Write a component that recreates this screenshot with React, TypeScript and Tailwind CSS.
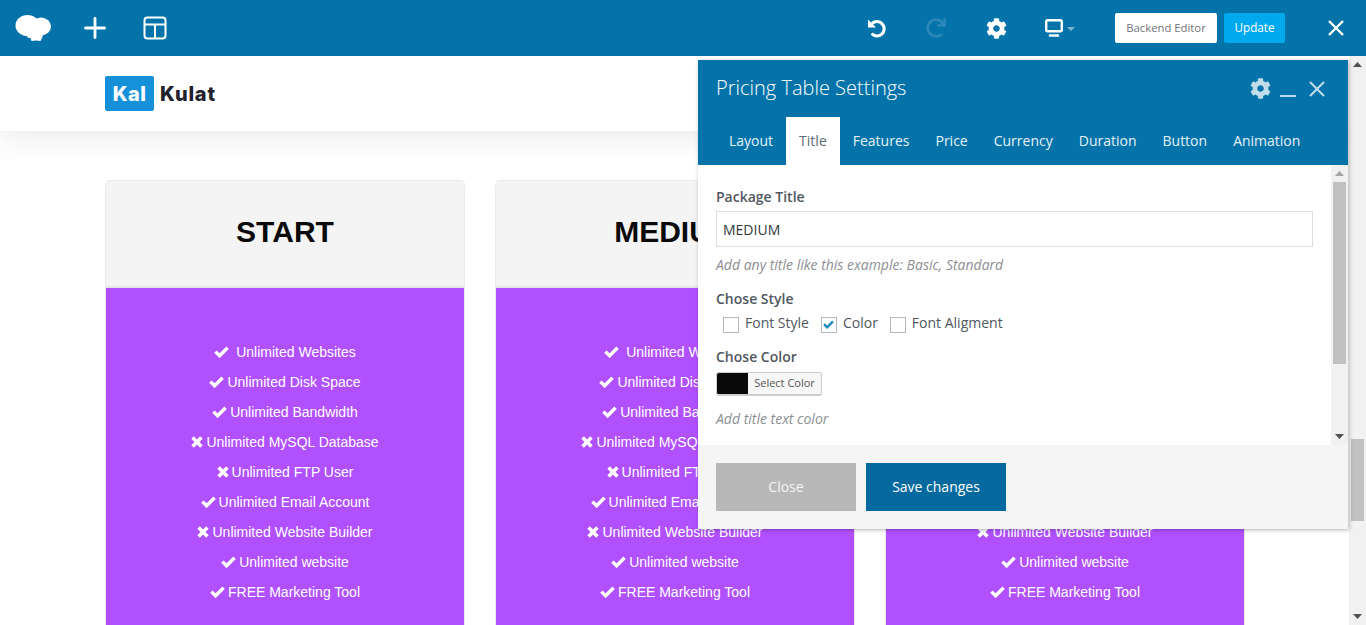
import React from 'react'
import { FaCog, FaRedo } from 'react-icons/fa'

const features: { label: string; ok: boolean; wide?: boolean }[] = [
  { label: 'Unlimited Websites', ok: true, wide: true },
  { label: 'Unlimited Disk Space', ok: true },
  { label: 'Unlimited Bandwidth', ok: true },
  { label: 'Unlimited MySQL Database', ok: false },
  { label: 'Unlimited FTP User', ok: false },
  { label: 'Unlimited Email Account', ok: true },
  { label: 'Unlimited Website Builder', ok: false },
  { label: 'Unlimited website', ok: true },
  { label: 'FREE Marketing Tool', ok: true },
]

const tabs = ['Layout', 'Title', 'Features', 'Price', 'Currency', 'Duration', 'Button', 'Animation']

const ArrowUp = ({ className }: { className: string }) => (
  <svg width="9" height="5" viewBox="0 0 9 5" className={className}>
    <path d="M4.5 0L9 5H0z" fill="currentColor" />
  </svg>
)

const ArrowDown = ({ className }: { className: string }) => (
  <svg width="9" height="5" viewBox="0 0 9 5" className={className}>
    <path d="M0 0h9L4.5 5z" fill="currentColor" />
  </svg>
)

const CheckMark = ({ className }: { className: string }) => (
  <svg viewBox="0 0 15 12" className={className} fill="none" stroke="currentColor" strokeWidth="3.4">
    <path d="M1.4 5.6l4.2 4.2L13.6 1.8" />
  </svg>
)

const CrossMark = () => (
  <svg viewBox="0 0 12 12" className="w-[12px] h-[12px]" fill="none" stroke="currentColor" strokeWidth="3.6">
    <path d="M1.6 1.6l8.8 8.8M10.4 1.6l-8.8 8.8" />
  </svg>
)

const CloudLogo = () => (
  <svg width="38" height="28" viewBox="0 0 38 28" fill="white">
    <ellipse cx="13.5" cy="11.5" rx="12" ry="10.5" />
    <ellipse cx="27" cy="12.5" rx="10" ry="9" />
    <path d="M12 18h18l-2 6-1.5 3-5-.5-4 .5-1-3-3-.5z" />
  </svg>
)

const LayoutIcon = () => (
  <svg width="24" height="24" viewBox="0 0 24 24" fill="none" stroke="white" strokeWidth="2">
    <rect x="1.5" y="1.5" width="21" height="21" rx="3" />
    <path d="M1.5 8.5h21M12 8.5v14" />
  </svg>
)

const UndoIcon = () => (
  <svg width="20" height="20" viewBox="0 0 20 20" fill="none">
    <path d="M5 5.6A7.2 7.2 0 1 1 4.6 15.6" stroke="white" strokeWidth="3" />
    <path d="M1 1.6v8h8z" fill="white" />
  </svg>
)

const DesktopIcon = () => (
  <svg width="20" height="19" viewBox="0 0 20 19" fill="none">
    <rect x="1.2" y="1.2" width="15.6" height="11" rx="1.5" stroke="white" strokeWidth="2.4" />
    <path d="M5 16.5h8" stroke="white" strokeWidth="2.4" strokeLinecap="round" />
  </svg>
)

const Card = ({ title }: { title: string }) => (
  <div className="border-x border-t border-[#e9e9ee] rounded-t-[5px]">
    <div className="h-[101px] pb-[4px] box-content bg-[#f4f4f4] rounded-t-[5px] border-b-2 border-[#e6e6e6] flex items-center justify-center">
      <h2 className="text-[30px] font-bold text-[#0a0a0a] font-['Liberation_Sans',sans-serif]">{title}</h2>
    </div>
    <ul className="bg-[#b150ff] pt-[49px] pb-10 text-white text-[14px] font-['Liberation_Sans',sans-serif]">
      {features.map(f => (
        <li key={f.label} className={`h-[30px] flex items-center justify-center ${f.wide ? 'gap-[7px]' : 'gap-[3px]'}`}>
          {f.ok ? <CheckMark className="w-[15px] h-[12px]" /> : <CrossMark />}
          <span>{f.label}</span>
        </li>
      ))}
    </ul>
  </div>
)

const PricingSettings = () => (
  <div className="absolute left-[698px] top-[60px] w-[650px] h-[469px] flex flex-col bg-white shadow-[1px_1px_4px_rgba(0,0,0,0.3)] font-['Open_Sans',sans-serif]">
    <div className="h-[105px] bg-[#0473aa] shrink-0 flex flex-col">
      <div className="h-[57px] pl-[18px] pr-[23px] flex items-center justify-between">
        <h3 className="text-[20px] font-light text-white pb-[2px]">Pricing Table Settings</h3>
        <div className="flex items-center text-[#c3dcea]">
          <FaCog className="w-[21px] h-[21px]" />
          <div className="w-[16px] h-[2px] bg-[#c3dcea] ml-[9px] mt-[15px]" />
          <svg width="16" height="16" viewBox="0 0 16 16" className="ml-[13px]" stroke="#c3dcea" strokeWidth="2">
            <path d="M1 1l14 14M15 1L1 15" />
          </svg>
        </div>
      </div>
      <div className="flex-1 pl-[18px] flex items-stretch text-[14px] text-[#e6f1f7]">
        {tabs.map(t => (
          <div
            key={t}
            className={`px-[13px] pb-[2px] flex items-center ${t === 'Title' ? 'bg-white text-[#5d6b73]' : ''}`}
          >
            {t}
          </div>
        ))}
      </div>
    </div>

    <div className="h-[280px] shrink-0 flex">
      <div className="flex-1 pl-[18px] pr-[18px] pt-[23px] text-[14px] text-[#50575e]">
        <label className="block font-semibold text-[14px] leading-[18px]">Package Title</label>
        <input
          readOnly
          value="MEDIUM"
          className="block mt-[5px] w-full h-[36px] border border-[#dddddd] px-[6px] text-[14px] text-[#32373c] outline-none"
        />
        <p className="mt-[8px] italic text-[#8c8f94] text-[14px] leading-[19px]">Add any title like this example: Basic, Standard</p>
        <div className="mt-[15px] font-semibold leading-[19px]">Chose Style</div>
        <div className="mt-[5px] pl-[7px] flex items-center h-[19px] leading-[19px]">
          <span className="w-4 h-4 border border-[#b4b9be] bg-white mr-[6px] mt-[4px]" />
          <span className="mr-[12px]">Font Style</span>
          <span className="w-4 h-4 border border-[#b4b9be] bg-white mr-[6px] mt-[4px] flex items-center justify-center">
            <CheckMark className="w-[11px] h-[9px] text-[#1e8cbe]" />
          </span>
          <span className="mr-[12px]">Color</span>
          <span className="w-4 h-4 border border-[#b4b9be] bg-white mr-[6px] mt-[4px]" />
          <span>Font Aligment</span>
        </div>
        <div className="mt-[15px] font-semibold leading-[19px]">Chose Color</div>
        <div className="mt-[6px] w-[106px] h-[24px] flex rounded-[3px] border border-[#cccccc] border-b-2 overflow-hidden">
          <span className="w-[31px] bg-[#0a0a0a]" />
          <span className="flex-1 bg-[#f7f7f7] text-[11px] text-[#555555] flex items-center justify-center">Select Color</span>
        </div>
        <p className="mt-[13px] italic text-[#8c8f94] leading-[19px]">Add title text color</p>
      </div>
      <div className="w-[17px] bg-[#f1f1f1] flex flex-col items-center shrink-0">
        <div className="h-[17px] flex items-center justify-center"><ArrowUp className="text-[#a3a3a3]" /></div>
        <div className="w-[13px] h-[182px] bg-[#c1c1c1]" />
        <div className="flex-1" />
        <div className="h-[17px] flex items-center justify-center"><ArrowDown className="text-[#505050]" /></div>
      </div>
    </div>

    <div className="flex-1 bg-[#f5f5f5] pl-[18px] pt-[18px] flex gap-[10px] text-[14px]">
      <button className="w-[140px] h-[48px] pb-[2px] bg-[#b8b8b8] text-[#f4f4f4]">Close</button>
      <button className="w-[140px] h-[48px] pb-[2px] bg-[#04699f] text-white">Save changes</button>
    </div>
  </div>
)

export default function App() {
  return (
    <div className="relative h-[625px] w-[1366px] overflow-hidden bg-white">
      <header className="h-[56px] bg-[#0473aa] flex items-center pl-[14px] pr-[22px] font-['Open_Sans',sans-serif]">
        <CloudLogo />
        <svg width="22" height="22" viewBox="0 0 22 22" className="ml-[32px]" stroke="white" strokeWidth="2.8" strokeLinecap="round">
          <path d="M11 1.5v19M1.5 11h19" />
        </svg>
        <div className="ml-[37px]"><LayoutIcon /></div>
        <div className="flex-1" />
        <UndoIcon />
        <FaRedo className="ml-[39px] w-[20px] h-[20px] text-[#2a88b8]" />
        <FaCog className="ml-[40px] w-[21px] h-[21px] text-white" />
        <div className="ml-[38px]"><DesktopIcon /></div>
        <svg width="8" height="4" viewBox="0 0 8 4" className="ml-[2px] mt-[1px]"><path d="M0 0h8L4 4z" fill="#7fb6d3" /></svg>
        <button className="ml-[40px] w-[102px] h-[30px] bg-white rounded-[2px] text-[11.3px] text-[#6f7479]">Backend Editor</button>
        <button className="ml-[7px] w-[61px] h-[30px] bg-[#00a9ee] rounded-[2px] text-[11.7px] text-white">Update</button>
        <svg width="16" height="16" viewBox="0 0 16 16" className="ml-[43px]" stroke="white" strokeWidth="2.4">
          <path d="M1 1l14 14M15 1L1 15" />
        </svg>
      </header>

      <div className="flex h-[569px]">
        <main className="flex-1 overflow-hidden">
          <div className="h-[75px] bg-white shadow-[0_8px_30px_rgba(0,0,0,0.08)] pl-[105px] flex items-center">
            <span className="w-[49px] h-[35px] bg-[#1591d9] rounded-[2px] text-white font-['Inter',sans-serif] font-extrabold text-[20px] tracking-[0.4px] flex items-center justify-center">Kal</span>
            <span className="ml-[6px] pt-[1px] text-[#20212b] font-['Inter',sans-serif] font-extrabold text-[20px] tracking-[0.8px]">Kulat</span>
          </div>
          <div className="pt-[49px] pl-[105px] grid grid-cols-[360px_360px_360px] gap-[30px]">
            <Card title="START" />
            <Card title="MEDIUM" />
            <Card title="ULTIMATE" />
          </div>
        </main>
        <aside className="w-[17px] bg-[#f1f1f1] flex flex-col items-center shrink-0">
          <div className="h-[17px] flex items-center justify-center"><ArrowUp className="text-[#505050]" /></div>
          <div className="mt-[366px] w-[13px] h-[82px] bg-[#c1c1c1]" />
          <div className="flex-1" />
          <div className="h-[17px] flex items-center justify-center"><ArrowDown className="text-[#505050]" /></div>
        </aside>
      </div>

      <PricingSettings />
    </div>
  )
}
